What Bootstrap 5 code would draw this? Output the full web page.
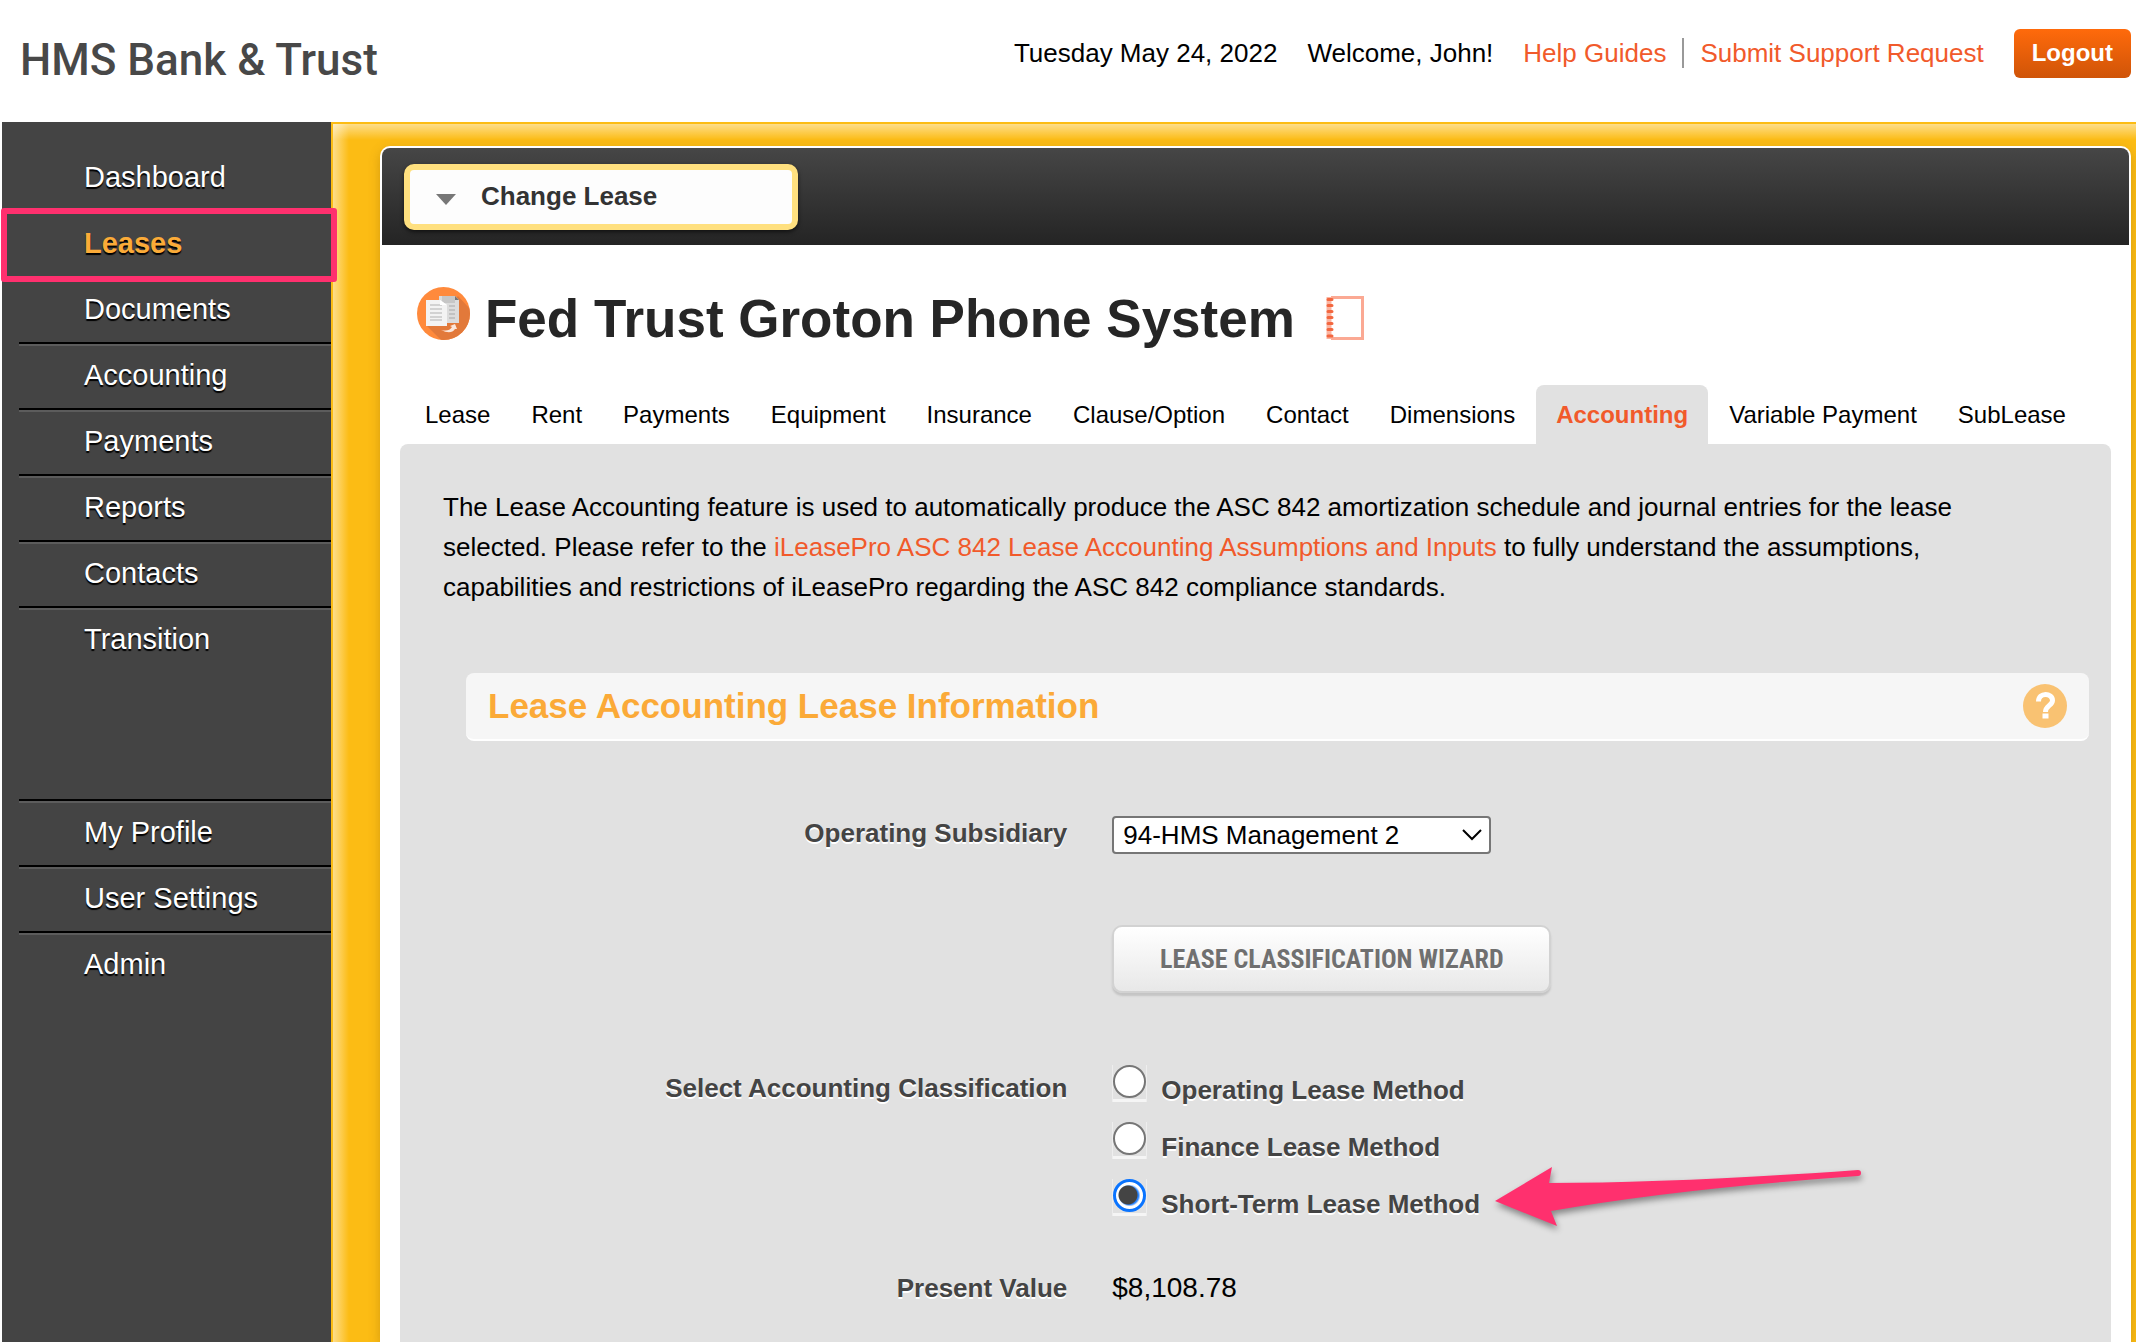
<!DOCTYPE html>
<html lang="en">
<head>
<meta charset="utf-8">
<meta name="viewport" content="width=device-width, initial-scale=1">
<title>Fed Trust Groton Phone System - Accounting</title>
<link href="https://cdn.jsdelivr.net/npm/bootstrap@5.3.0/dist/css/bootstrap.min.css" rel="stylesheet">
<style>
  body { font-family: "Liberation Sans", Arial, sans-serif; font-size: 26px; line-height: 40px; color: #000; background: #fff; }
  a { color: #f15a2b; text-decoration: none; }

  .topbar { height: 122px; padding: 24px 5px 0 20px; }
  .brand { font-family: Roboto, "Liberation Sans", sans-serif; font-weight: 500; font-size: 44px; line-height: 72px; color: #484848; }
  .userbar { padding-top: 5px; }
  .userbar .note { padding-bottom: 2px; margin-right: 30px; }
  .userbar .links a + a { border-left: 2px solid #999; padding-left: 16px; margin-left: 16px; line-height: 30px; }
  .btn-logout { background: linear-gradient(#ff6a0b, #cf5408); color: #fff; font-weight: 700; font-size: 24px; line-height: 47px; padding: 0 18px 2px; border: 0; border-radius: 6px; }
  .btn-logout:hover { background: #cf5408; color: #fff; }

  .shell { min-height: calc(100vh - 122px); padding-left: 2px; }
  .side { width: 329px; background: #444; padding-top: 22px; padding-left: 17px; }
  .side .nav-link { height: 66px; padding: 10px 0 0 65px; border-top: 2px solid #000; box-shadow: inset 0 2px #5c5c5c; color: #fff; font-size: 29px; line-height: 42px; text-shadow: 0 2px 1px #000; }
  .side .first { border-color: transparent; box-shadow: none; }
  .side .active { color: #fbab38; font-weight: 700; }
  .side-lower { margin-top: 127px; }
  .marker { position: absolute; left: -18px; right: -6px; top: -4px; height: 74px; border: 6px solid #ff306e; border-radius: 3px; pointer-events: none; }

  .stage { background: linear-gradient(rgba(255,255,255,.5), rgba(255,255,255,0) 16px), linear-gradient(90deg, rgba(255,255,255,.5), rgba(255,255,255,0) 16px), #fcbc14; border: 0 solid #fcbc14; border-width: 2px 0 0 2px; padding: 22px 5px 0 47px; }
  .sheet { background: #fff; border: 2px solid #fff; border-bottom: 0; border-radius: 10px 10px 0 0; box-shadow: 0 4px 12px rgba(120,80,0,.3); }
  .sheet-bar { height: 97px; padding: 16px 22px; background: linear-gradient(#464646, #242424); border-radius: 8px 8px 0 0; }
  .btn-change { width: 394px; height: 66px; padding: 0 0 2px 26px; gap: 25px; background: #fdfdfd; border: 6px solid #ffe07f; border-radius: 10px; font-weight: 700; font-size: 26px; color: #333; box-shadow: 0 2px 4px rgba(0,0,0,.6); }
  .btn-change svg { margin-top: 6px; }

  .titlebar { padding: 42px 35px 0; gap: 15px; }
  .titlebar h1 { font-size: 53px; line-height: 64px; font-weight: 700; color: #262626; margin: 0 15px 0 0; }

  .tabs { padding: 34px 0 0 23px; column-gap: 1px; }
  .tabs .nav-link { padding: 10px 20px 9px; font-size: 24px; color: #000; border-radius: 8px 8px 0 0; }
  .tabs .active { background: #e1e1e1; color: #f15a2b; font-weight: 700; }

  .panel { margin: 0 18px; background: #e1e1e1; border-radius: 8px 8px 0 0; padding-top: 43px; }
  .intro { padding: 0 68px 0 43px; margin: 0; }
  .section-head { margin: 66px 22px 0 66px; height: 68px; padding: 0 22px; background: #f6f6f6; border-bottom: 2px solid #fff; border-radius: 8px; }
  .section-head h2 { font-size: 35px; line-height: 66px; font-weight: 700; color: #fbaa38; margin: 0; }
  .help { width: 44px; height: 44px; padding: 0; border: 0; background: none; }

  .lease-form { display: flex; flex-direction: column; gap: 70px; padding-top: 72px; }
  .field { display: flex; gap: 45px; }
  .field-name { flex: 0 0 39%; text-align: right; }
  .strong-text { font-weight: 700; color: #444; text-shadow: 0 2px #fff; }
  .subsidiary { width: 379px; height: 38px; padding: 0 24px 0 9px; border: 2px solid #767676; border-radius: 4px; font-size: 26px; line-height: 34px; color: #000; background: #fff; appearance: none; }
  .select-wrap { position: relative; padding-top: 2px; }
  .select-wrap svg { position: absolute; right: 9px; top: 16px; pointer-events: none; }
  .btn-wizard { height: 68px; width: 439px; padding: 0; font-family: "Roboto Condensed", "Liberation Sans Narrow", "Liberation Sans", sans-serif; font-weight: 700; font-size: 26px; line-height: 60px; color: #707070; text-shadow: 0 2px #fff; background: linear-gradient(#fff, #e8e8e8); border: 2px solid #d2d2d2; border-radius: 10px; box-shadow: 0 3px 2px #c4c4c4; }
  .group-name { padding-top: 5px; }
  .methods { padding-top: 2px; margin-bottom: -38px; }
  .choice { display: flex; height: 57px; gap: 14px; }
  .tick { flex: none; width: 35px; height: 37px; padding: 0 1px; background: linear-gradient(#f5f5f5, #f5f5f5) bottom / 100% 3px no-repeat; box-shadow: inset 1px 0 #eee, inset -1px 0 #eee; }
  .tick input { appearance: none; display: block; margin: 0; width: 33px; height: 33px; border: 2px solid #767676; border-radius: 50%; background: #fff; }
  .tick input:checked { border: 3px solid #0a74ff; background: radial-gradient(circle at 12px 13px, #444 9px, transparent 10px), radial-gradient(circle, #2582ff 9px, #fff 11px); }
  .choice label { line-height: 30px; padding-top: 10px; }
  .arrow { position: absolute; left: 383px; top: 102px; filter: drop-shadow(1px 4px 3px rgba(0,0,0,.4)); }
  .amount { font-size: 28px; }
</style>
</head>
<body>
<header class="topbar d-flex justify-content-between align-items-start">
  <div class="brand">HMS Bank &amp; Trust</div>
  <div class="userbar d-flex align-items-center">
    <span class="note">Tuesday May 24, 2022</span>
    <span class="note">Welcome, John!</span>
    <nav class="links note d-flex align-items-center"><a href="#">Help Guides</a><a href="#">Submit Support Request</a></nav>
    <button type="button" class="btn btn-logout">Logout</button>
  </div>
</header>

<div class="shell d-flex">
  <aside class="side flex-shrink-0">
    <nav class="nav flex-column flex-nowrap">
      <a class="nav-link first" href="#">Dashboard</a>
      <a class="nav-link active position-relative" href="#">Leases<span class="marker"></span></a>
      <a class="nav-link" href="#">Documents</a>
      <a class="nav-link" href="#">Accounting</a>
      <a class="nav-link" href="#">Payments</a>
      <a class="nav-link" href="#">Reports</a>
      <a class="nav-link" href="#">Contacts</a>
      <a class="nav-link" href="#">Transition</a>
    </nav>
    <nav class="nav flex-column flex-nowrap side-lower">
      <a class="nav-link" href="#">My Profile</a>
      <a class="nav-link" href="#">User Settings</a>
      <a class="nav-link" href="#">Admin</a>
    </nav>
  </aside>

  <div class="stage flex-grow-1 d-flex">
    <main class="sheet flex-grow-1 d-flex flex-column">
      <div class="sheet-bar">
        <button type="button" class="btn btn-change d-flex align-items-center">
          <svg width="20" height="11" viewBox="0 0 20 11"><path d="M0 0h20L10 11z" fill="#777"/></svg>
          Change Lease
        </button>
      </div>

      <div class="titlebar d-flex">
        <svg width="53" height="53" viewBox="0 0 53 53" aria-hidden="true">
          <defs><clipPath id="disc"><circle cx="26.500" cy="26.500" r="26.500"/></clipPath></defs>
          <circle cx="26.500" cy="26.500" r="26.500" fill="#ff8a3c"/>
          <path d="M41 9L53 22V53H24L10 39z" fill="#e2793a" clip-path="url(#disc)"/>
          <path d="M22 9H38L42 13V36H22z" fill="#dcdcdc"/>
          <path d="M25 9H38V16H25z" fill="#c6c6c6"/>
          <path d="M38 9l4 4h-4z" fill="#777"/>
          <path d="M32 19h6M32 23h6M32 27h6M32 31h6" stroke="#c2c2c2" stroke-width="2"/>
          <path d="M9 13H23L30 18V39H9z" fill="#f3f3f3"/>
          <path d="M13 18h12M13 22h12M13 26h12M13 30h12M13 33h12" stroke="#d2d2d2" stroke-width="2"/>
          <path d="M23 13l7 5h-7z" fill="#fff"/>
          <path d="M24 43q8 2 11-3l-2-1 5-2 2 5-2 0q-4 6-14 1z" fill="#fbe6da"/>
        </svg>
        <h1>Fed Trust Groton Phone System</h1>
        <svg width="40" height="46" viewBox="0 0 40 46" class="mt-2" aria-hidden="true">
          <path d="M6 2.500H37.500V43.500H6" fill="#fff" stroke="#fba993" stroke-width="3"/>
          <path d="M4 2V44" stroke="#fbb5a2" stroke-width="5"/>
          <path d="M3 4.500h4M3 10.500h4M3 16.500h4M3 22.500h4M3 28.500h4M3 34.500h4M3 41h4" stroke="#f3673f" stroke-width="3" stroke-linecap="round"/>
        </svg>
      </div>

      <nav class="tabs nav flex-nowrap text-nowrap">
        <a class="nav-link" href="#">Lease</a>
        <a class="nav-link" href="#">Rent</a>
        <a class="nav-link" href="#">Payments</a>
        <a class="nav-link" href="#">Equipment</a>
        <a class="nav-link" href="#">Insurance</a>
        <a class="nav-link" href="#">Clause/Option</a>
        <a class="nav-link" href="#">Contact</a>
        <a class="nav-link" href="#">Dimensions</a>
        <a class="nav-link active" href="#">Accounting</a>
        <a class="nav-link" href="#">Variable Payment</a>
        <a class="nav-link" href="#">SubLease</a>
      </nav>

      <section class="panel flex-grow-1">
        <p class="intro">The Lease Accounting feature is used to automatically produce the ASC 842 amortization schedule and journal entries for the lease selected. Please refer to the <a href="#">iLeasePro ASC 842 Lease Accounting Assumptions and Inputs</a> to fully understand the assumptions, capabilities and restrictions of iLeasePro regarding the ASC 842 compliance standards.</p>

        <div class="section-head d-flex justify-content-between align-items-center">
          <h2>Lease Accounting Lease Information</h2>
          <button type="button" class="help d-flex" aria-label="Help">
            <svg width="44" height="44" viewBox="0 0 44 44"><circle cx="22" cy="22" r="22" fill="#f9c272"/><path d="M15.500 17.500C15.500 8 29.500 8.500 29.500 16.500C29.500 21.500 22.500 21.500 22.500 28" fill="none" stroke="#fff" stroke-width="5"/><path d="M19.500 29.500h6v5h-6z" fill="#fff"/></svg>
          </button>
        </div>

        <form class="lease-form">
          <div class="field">
            <label class="field-name strong-text" for="subsidiary">Operating Subsidiary</label>
            <div class="select-wrap">
              <select id="subsidiary" class="subsidiary"><option>94-HMS Management 2</option></select>
              <svg width="20" height="12" viewBox="0 0 20 12"><path d="M1 1l9 9 9-9" fill="none" stroke="#000" stroke-width="2"/></svg>
            </div>
          </div>
          <div class="field">
            <div class="field-name"></div>
            <button type="button" class="btn btn-wizard">LEASE CLASSIFICATION WIZARD</button>
          </div>
          <div class="field" role="radiogroup" aria-labelledby="method-name">
            <div class="field-name group-name strong-text" id="method-name">Select Accounting Classification</div>
            <div class="methods position-relative">
              <div class="choice"><span class="tick"><input type="radio" name="method" id="m1"></span><label class="strong-text" for="m1">Operating Lease Method</label></div>
              <div class="choice"><span class="tick"><input type="radio" name="method" id="m2"></span><label class="strong-text" for="m2">Finance Lease Method</label></div>
              <div class="choice"><span class="tick"><input type="radio" name="method" id="m3" checked></span><label class="strong-text" for="m3">Short-Term Lease Method</label></div>
              <svg class="arrow" width="368" height="64" viewBox="0 0 368 64" aria-hidden="true"><path d="M0 36L57 2L54 18Q180 18 363 5Q366 5 366 8Q366 11 363 11Q180 24 56 46L62 61z" fill="#ff306e"/></svg>
            </div>
          </div>
          <div class="field">
            <div class="field-name strong-text">Present Value</div>
            <div class="amount">$8,108.78</div>
          </div>
        </form>
      </section>
    </main>
  </div>
</div>
<script src="https://cdn.jsdelivr.net/npm/bootstrap@5.3.0/dist/js/bootstrap.bundle.min.js"></script>
</body>
</html>
